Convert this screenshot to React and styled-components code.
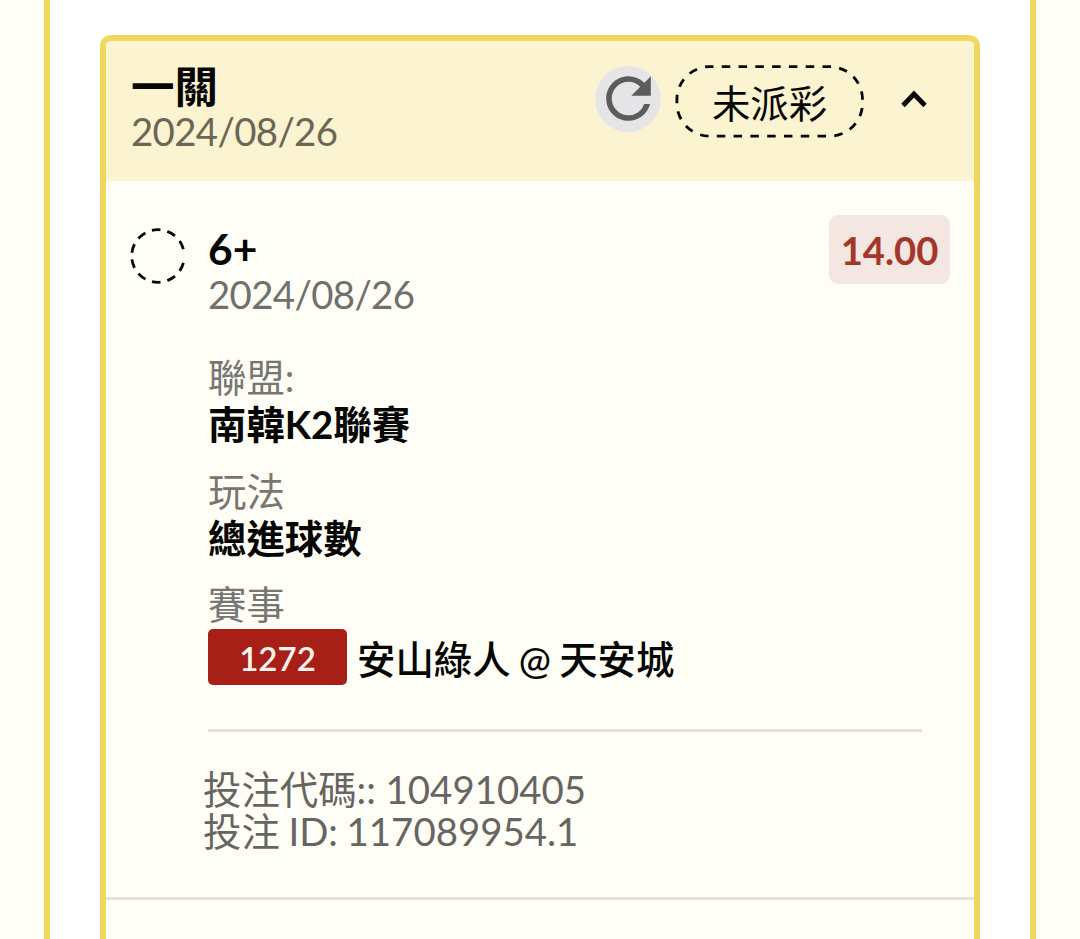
import React from "react"
import styled, { createGlobalStyle } from "styled-components"

const ink = "#060604"
const cream = "#fffef6"
const gold = "#f0d860"

const GlobalStyle = createGlobalStyle`
  * {
    box-sizing: border-box;
  }

  body {
    margin: 0;
    background: ${cream};
    font-family: Lato, "Noto Sans CJK TC", sans-serif;
    color: ${ink};
  }
`

const Page = styled.main`
  height: 939px;
  padding: 0 44px;
  overflow: hidden;
`

const Panel = styled.section`
  height: 100%;
  padding: 35px 50px 0;
  background: #fff;
  border: solid ${gold};
  border-width: 0 6px;
`

const Card = styled.article`
  height: 960px;
  background: ${cream};
  border: 6px solid ${gold};
  border-radius: 11px;
  overflow: hidden;
`

const CardHeader = styled.header`
  display: flex;
  justify-content: space-between;
  height: 140px;
  padding: 22px 46px 0 25px;
  background: #fcf3d0;
`

const Title = styled.h1`
  margin: 0;
  font-size: 43.5px;
  font-weight: 700;
  line-height: 46px;
`

const DateText = styled.p`
  margin: 0;
  font-size: 38.4px;
  letter-spacing: -0.65px;
  line-height: 44px;
  color: ${props => props.$color || "#70706c"};
`

const Actions = styled.div`
  display: flex;
  align-items: flex-start;
`

const RefreshButton = styled.button`
  display: flex;
  align-items: center;
  justify-content: center;
  width: 66px;
  height: 66px;
  margin: 2.5px 14px 0 0;
  padding: 0;
  border: 0;
  border-radius: 50%;
  background: #e5e5e8;

  svg {
    flex: none;
  }
`

const StatusPill = styled.div`
  position: relative;
  width: 189px;
  height: 73px;
  margin: 2px 36px 0 0;
  font-size: 38.4px;
  line-height: 76px;
  text-align: center;

  svg {
    position: absolute;
    top: 0;
    left: 0;
  }
`

const ToggleButton = styled.button`
  display: flex;
  margin-top: 26px;
  padding: 0;
  border: 0;
  background: none;
`

const Bet = styled.div`
  display: flex;
  height: 719px;
  padding: 34px 24px 0 23px;
  border-bottom: 3px solid #e4e3df;
`

const StatusCircle = styled.svg`
  flex: none;
  margin: 12px 21px 0 0;
`

const Details = styled.div`
  flex: 1;
`

const TopRow = styled.div`
  display: flex;
  justify-content: space-between;
`

const Pick = styled.h2`
  margin: 0;
  padding-top: 11px;
  font-size: 42.5px;
  font-weight: 700;
  line-height: 46px;
`

const Odds = styled.div`
  width: 121px;
  height: 69px;
  border-radius: 9px;
  background: #f4e7e1;
  color: #a6352b;
  font-size: 38.2px;
  font-weight: 700;
  line-height: 71px;
  text-align: center;
`

const Fields = styled.dl`
  display: flex;
  flex-direction: column;
  gap: 19.5px;
  margin: 38px 0 0;
`

const Label = styled.dt`
  font-size: 38.4px;
  line-height: 47px;
  color: #777673;
`

const Value = styled.dd`
  display: flex;
  align-items: center;
  margin: 0;
  font-size: 38.4px;
  font-weight: 700;
  line-height: 47px;
  white-space: nowrap;
`

const EventRow = styled(Value)`
  padding-top: 1px;
`

const Code = styled.span`
  width: 139px;
  height: 56px;
  margin-right: 10px;
  border-radius: 5px;
  background: #a62018;
  color: #fff3ee;
  font-size: 33px;
  font-weight: 600;
  line-height: 58px;
  text-align: center;
`

const Teams = styled.span`
  padding-top: 4px;
  font-weight: 500;
  word-spacing: -1.5px;
`

const Divider = styled.hr`
  width: 714px;
  height: 3px;
  margin: 44px 0 36px;
  border: 0;
  background: #e4e3df;
`

const Reference = styled.p`
  margin: 0 0 0 -5px;
  font-size: 38.4px;
  line-height: 42px;
  word-spacing: ${props => props.$wordSpacing || "normal"};
  color: #666561;
`

const circleDashes = `0 7 ${"8.8 6.9 ".repeat(9)}8.8 100`

const App = () => (
  <>
    <GlobalStyle />
    <Page>
      <Panel>
        <Card>
          <CardHeader>
            <div>
              <Title>一關</Title>
              <DateText $color="#6b6655">2024/08/26</DateText>
            </div>
            <Actions>
              <RefreshButton aria-label="refresh">
                <svg width="67" height="67" viewBox="0 0 24 24" fill="#5c5c5d">
                  <path d="M17.65 6.35A7.958 7.958 0 0 0 12 4c-4.42 0-7.99 3.58-7.99 8s3.57 8 7.99 8c3.73 0 6.84-2.55 7.73-6h-2.08A5.99 5.99 0 0 1 12 18c-3.31 0-6-2.69-6-6s2.69-6 6-6c1.66 0 3.14.69 4.22 1.78L13 11h7V4z" />
                </svg>
              </RefreshButton>
              <StatusPill>
                未派彩
                <svg width="189" height="73" fill="none" stroke={ink} strokeWidth="2.8">
                  <rect
                    x="1.9"
                    y="1.6"
                    width="185.6"
                    height="69.6"
                    rx="33"
                    pathLength="459"
                    strokeDasharray="8.6 8.4"
                    strokeDashoffset="5"
                  />
                </svg>
              </StatusPill>
              <ToggleButton aria-label="collapse">
                <svg width="28" height="20" fill="none" stroke={ink} strokeWidth="4.8">
                  <path d="M3 16.5 14 5l11 11.5" />
                </svg>
              </ToggleButton>
            </Actions>
          </CardHeader>

          <Bet>
            <StatusCircle width="58" height="58" fill="none" stroke={ink} strokeWidth="2.8">
              <circle cx="29" cy="29" r="26.3" strokeDasharray={circleDashes} />
            </StatusCircle>
            <Details>
              <TopRow>
                <div>
                  <Pick>6+</Pick>
                  <DateText>2024/08/26</DateText>
                </div>
                <Odds>14.00</Odds>
              </TopRow>

              <Fields>
                <div>
                  <Label>聯盟:</Label>
                  <Value>南韓K2聯賽</Value>
                </div>
                <div>
                  <Label>玩法</Label>
                  <Value>總進球數</Value>
                </div>
                <div>
                  <Label>賽事</Label>
                  <EventRow>
                    <Code>1272</Code>
                    <Teams>安山綠人 @ 天安城</Teams>
                  </EventRow>
                </div>
              </Fields>

              <Divider />

              <Reference>投注代碼:: 104910405</Reference>
              <Reference $wordSpacing="-1.2px">投注 ID: 117089954.1</Reference>
            </Details>
          </Bet>
        </Card>
      </Panel>
    </Page>
  </>
)

export default App
